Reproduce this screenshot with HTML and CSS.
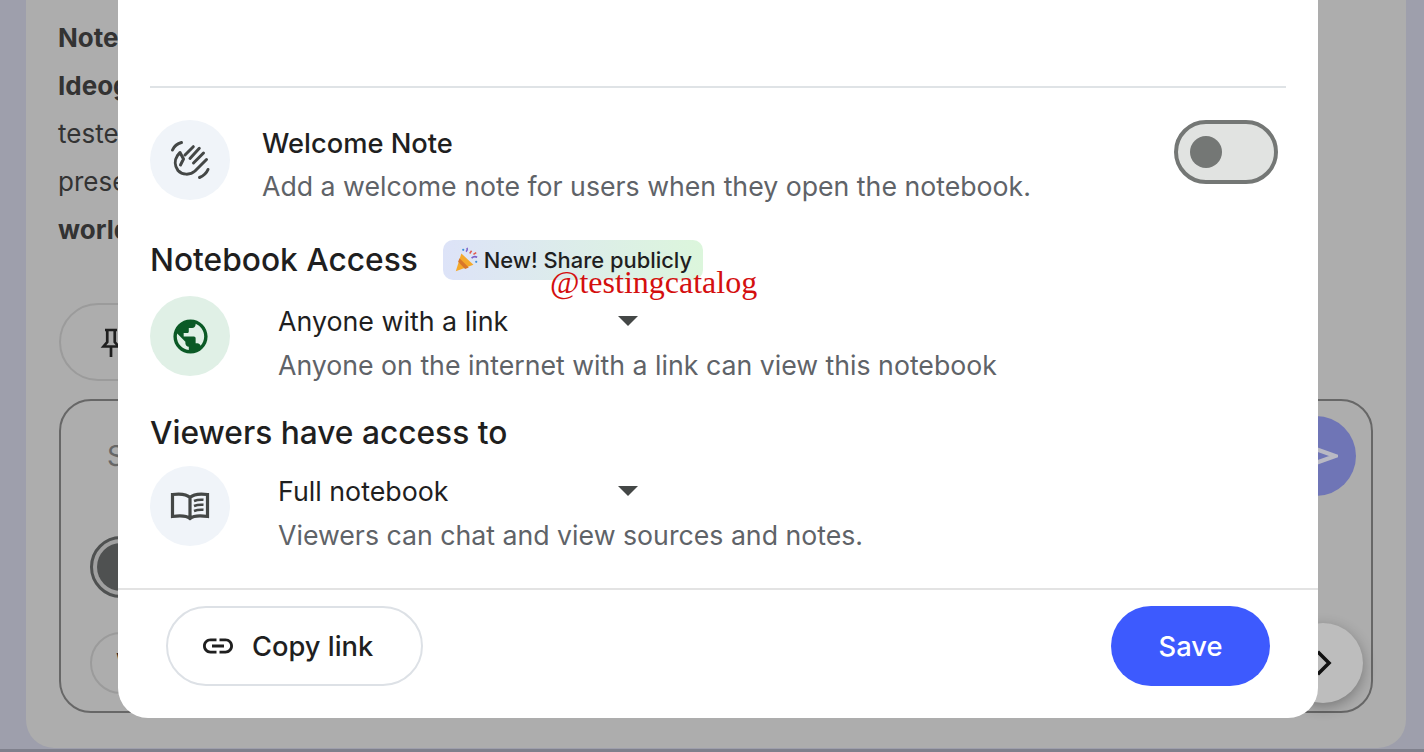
FILE: index.html
```html
<!DOCTYPE html>
<html lang="en">
<head>
  <meta charset="UTF-8" />
  <title>Notebook sharing</title>
  <link rel="stylesheet" href="styles.css">
</head>
<body>
  <div class="page">
    <div class="notes">
      <p><b>Notebook</b></p>
      <p><b>Ideogram</b></p>
      <p>tested</p>
      <p>present</p>
      <p><b>world</b></p>
    </div>
    <button class="pin-chip">
      <svg viewBox="0 0 24 24" width="36" height="36"><path d="M8 4h8M9.500 4v8L7 15h10l-2.500-3V4M12 15v7" fill="none" stroke="#1f1f1f" stroke-width="1.800"/></svg>
      Save to note
    </button>
    <div class="composer">
      <div class="composer-top">
        <span class="placeholder">S</span>
        <span class="send">
          <svg viewBox="0 0 32 32" width="44" height="44"><path d="M2 6l28 10L2 26l5-10z" fill="none" stroke="#b9b9c4" stroke-width="3"/></svg>
        </span>
      </div>
      <div class="source-dot"><span></span></div>
      <div class="composer-chips">
        <span class="chip">What is this?</span>
        <span class="next">
          <svg viewBox="0 0 24 24" width="36" height="36"><path d="M8.500 4.500l7.500 7.500-7.500 7.500" fill="none" stroke="#111" stroke-width="2.400"/></svg>
        </span>
      </div>
    </div>
  </div>

  <div class="modal">
    <div class="modal-body">
      <div class="divider"></div>

      <div class="row welcome">
        <div class="circle">
          <svg viewBox="0 0 40 40" width="40" height="40" fill="none" stroke="#444746" stroke-width="3" stroke-linecap="round" stroke-linejoin="round">
            <path d="M2.500 10C4 6.500 7.500 3.500 11.500 2.500"/>
            <path d="M38 29.500C36.500 33 33.500 36 29.500 37.500"/>
            <path d="M23.300 6.700L15 15M29.300 8.300L20 18.500M33.500 13L23.500 23M36.500 19.500L25 31C20 35.500 12 35 8 30.500 4.500 26 4.500 20 7.500 15.500L10 12.500 13.500 19 10.500 25"/>
          </svg>
        </div>
        <div class="row-text">
          <div class="title">Welcome Note</div>
          <div class="desc">Add a welcome note for users when they open the notebook.</div>
        </div>
        <div class="toggle"><span></span></div>
      </div>

      <div class="section-head first">
        <h3>Notebook Access</h3>
        <span class="badge">
          <svg viewBox="0 0 28 28" width="26" height="26">
            <path d="M9 7l13 12L3 26z" fill="#f4a92b"/>
            <path d="M7 12l10 10-4 1.600L5.500 16z" fill="#d9772a"/>
            <path d="M14 5c1-1 2-2 1-4M20 12c2-2 4-2 6-1" fill="none" stroke="#7a5fc9" stroke-width="1.600"/>
            <path d="M18 7l2-3M22 8l3-2" fill="none" stroke="#e2574c" stroke-width="1.600"/>
            <circle cx="11" cy="3" r="1.200" fill="#3f8fd8"/>
            <circle cx="25" cy="16" r="1.200" fill="#3f8fd8"/>
          </svg>
          New! Share publicly
        </span>
      </div>

      <div class="row">
        <div class="circle green">
          <svg viewBox="0 0 24 24" width="41" height="41"><path fill="#0b5a26" d="M12 2C6.480 2 2 6.480 2 12s4.480 10 10 10 10-4.480 10-10S17.520 2 12 2zm-1 17.930c-3.950-.490-7-3.850-7-7.930 0-.620.080-1.210.210-1.790L9 15v1c0 1.100.900 2 2 2v1.930zm6.900-2.540c-.260-.810-1-1.390-1.900-1.390h-1v-3c0-.550-.450-1-1-1H8v-2h2c.550 0 1-.450 1-1V7h2c1.100 0 2-.900 2-2v-.410c2.930 1.190 5 4.060 5 7.410 0 2.080-.800 3.970-2.100 5.390z"/></svg>
        </div>
        <div class="row-text wide">
          <div class="select"><span class="select-label">Anyone with a link</span><span class="caret"></span></div>
          <div class="desc">Anyone on the internet with a link can view this notebook</div>
        </div>
      </div>

      <div class="section-head second">
        <h3>Viewers have access to</h3>
      </div>

      <div class="row">
        <div class="circle">
          <svg viewBox="0 0 40 30" width="40" height="30" fill="none" stroke="#444746" stroke-width="3.200">
            <path d="M20 6.500C17 3.500 10 2.500 2.500 3.500v22C10 24.500 17 25 20 27.500c3-2.500 10-3 17.500-2v-22C30 2.500 23 3.500 20 6.500zM20 6.500v21"/>
            <path d="M24 10c3-1.200 6-1.500 9.500-1.200M24 15c3-1.200 6-1.500 9.500-1.200M24 20c3-1.200 6-1.500 9.500-1.200" stroke-width="2.600"/>
          </svg>
        </div>
        <div class="row-text wide">
          <div class="select"><span class="select-label">Full notebook</span><span class="caret"></span></div>
          <div class="desc">Viewers can chat and view sources and notes.</div>
        </div>
      </div>
    </div>

    <div class="modal-footer">
      <button class="copy-btn">
        <svg viewBox="0 0 24 24" width="36" height="36"><path fill="#1f1f1f" d="M3.900 12c0-1.710 1.390-3.100 3.100-3.100h4V7H7c-2.760 0-5 2.240-5 5s2.240 5 5 5h4v-1.900H7c-1.710 0-3.100-1.390-3.100-3.100zM8 13h8v-2H8v2zm9-6h-4v1.900h4c1.710 0 3.100 1.390 3.100 3.100s-1.390 3.100-3.100 3.100h-4V17h4c2.760 0 5-2.240 5-5s-2.240-5-5-5z"/></svg>
        Copy link
      </button>
      <button class="save-btn">Save</button>
    </div>

    <div class="watermark">@testingcatalog</div>
  </div>
</body>
</html>
```

FILE: styles.css
```css
* {
  box-sizing: border-box;
}

html, body {
  margin: 0;
  height: 752px;
  overflow: hidden;
}

body {
  font-family: Inter, 'Noto Sans', sans-serif;
  background-color: #9e9fac;
  color: #1f1f1f;
  padding: 0 18px 4px 26px;
  border-bottom: 3px solid #7f808c;
  position: relative;
}

.page {
  height: 748px;
  background-color: #adadad;
  border-radius: 0 0 28px 28px;
  padding: 14px 33px 0;
}

.notes {
  font-size: 26px;
  line-height: 48px;
  color: #333;
  height: 240px;
  margin-left: -1px;
}

.notes p {
  margin: 0;
}

.pin-chip {
  display: flex;
  align-items: center;
  gap: 12px;
  margin-top: 49px;
  height: 78px;
  width: 260px;
  padding: 0 0 0 32px;
  border-radius: 39px;
  border: 2px solid #9b9b9b;
  background: none;
  font: inherit;
  font-size: 26px;
}

.composer {
  margin-top: 18px;
  height: 314px;
  border: 2px solid #676767;
  border-radius: 32px;
  padding: 15px 8px 0 29px;
}

.composer-top {
  display: flex;
  justify-content: space-between;
  align-items: center;
}

.placeholder {
  font-size: 28px;
  color: #666;
  margin-left: 17px;
}

.send {
  width: 80px;
  height: 80px;
  margin-right: 7px;
  border-radius: 50%;
  background-color: #6f75b6;
  display: flex;
  align-items: center;
  justify-content: center;
}

.source-dot {
  width: 62px;
  height: 62px;
  margin-top: 40px;
  padding: 4px;
  border-radius: 50%;
  border: 3px solid #4f5151;
  background-color: #a0a0a0;
}

.source-dot span {
  display: block;
  height: 100%;
  border-radius: 50%;
  background-color: #4f5151;
}

.composer-chips {
  display: flex;
  justify-content: space-between;
  align-items: center;
  height: 62px;
  margin-top: 34px;
}

.chip {
  height: 62px;
  padding: 0 24px;
  border: 2px solid #9b9b9b;
  border-radius: 31px;
  font-size: 26px;
  line-height: 58px;
}

.next {
  width: 80px;
  height: 80px;
  border-radius: 50%;
  background-color: #bdbdbd;
  box-shadow: 0 4px 14px rgba(0, 0, 0, 0.3);
  display: flex;
  align-items: center;
  justify-content: center;
  flex-shrink: 0;
}

/* dialog sits over the page */
.modal {
  position: absolute;
  left: 118px;
  top: 0;
  width: 1200px;
  height: 718px;
  background-color: #fff;
  border-radius: 0 0 30px 30px;
  display: flex;
  flex-direction: column;
}

.modal-body {
  height: 588px;
  padding: 86px 32px 0;
}

.divider {
  height: 2px;
  background-color: #dfe3e6;
}

.row {
  display: flex;
  align-items: flex-start;
  height: 80px;
}

.welcome {
  margin-top: 32px;
}

.circle {
  width: 80px;
  height: 80px;
  flex-shrink: 0;
  border-radius: 50%;
  background-color: #f0f4f9;
  display: flex;
  align-items: center;
  justify-content: center;
}

.circle.green {
  background-color: #e0f0e6;
}

.row-text {
  margin-left: 32px;
  margin-top: 2px;
  line-height: 43px;
}

.row-text.wide {
  margin-left: 48px;
  margin-top: 3px;
  line-height: 44px;
}

.title {
  font-size: 27.300px;
  font-weight: 500;
  color: #1f1f1f;
}

.desc {
  font-size: 26.700px;
  color: #5f6368;
}

.toggle {
  margin-left: auto;
  margin-right: 8px;
  width: 104px;
  height: 64px;
  border: 4px solid #747775;
  border-radius: 32px;
  background-color: #e1e3e1;
  padding: 12px;
}

.toggle span {
  display: block;
  width: 32px;
  height: 32px;
  border-radius: 50%;
  background-color: #747775;
}

.section-head {
  display: flex;
  align-items: center;
  gap: 25px;
  height: 40px;
}

.section-head.first {
  margin-top: 40px;
  margin-bottom: 16px;
}

.section-head.second {
  margin-top: 37px;
  margin-bottom: 13px;
}

.section-head h3 {
  margin: -2px 0 0;
  font-size: 31.700px;
  font-weight: 500;
  color: #1f1f1f;
}

.badge {
  display: flex;
  align-items: center;
  gap: 5px;
  width: 260px;
  height: 40px;
  padding-left: 10px;
  border-radius: 10px;
  background: linear-gradient(90deg, #dde3f8, #dcf6dc);
  font-size: 21.900px;
  font-weight: 500;
  white-space: nowrap;
}

.select {
  display: flex;
  align-items: center;
  font-size: 26.800px;
  color: #1f1f1f;
}

.select-label {
  width: 340px;
}

.caret {
  width: 0;
  height: 0;
  border-left: 10px solid transparent;
  border-right: 10px solid transparent;
  border-top: 10px solid #444746;
}

.modal-footer {
  flex: 1;
  display: flex;
  justify-content: space-between;
  border-top: 2px solid #e3e3e3;
  padding: 16px 48px 0;
}

.modal-footer button {
  height: 80px;
  border-radius: 40px;
  font-family: inherit;
  font-size: 27.300px;
  font-weight: 500;
}

.copy-btn {
  display: flex;
  align-items: center;
  gap: 16px;
  width: 257px;
  padding: 0 0 0 32px;
  border: 2px solid #dde1e6;
  background-color: #fff;
  color: #1f1f1f;
}

.save-btn {
  width: 159px;
  border: none;
  background-color: #3d5afe;
  color: #fff;
}

.watermark {
  position: absolute;
  left: 432px;
  top: 264px;
  font-family: 'Liberation Serif', serif;
  font-size: 32px;
  color: #d40f0f;
  white-space: nowrap;
}
```
